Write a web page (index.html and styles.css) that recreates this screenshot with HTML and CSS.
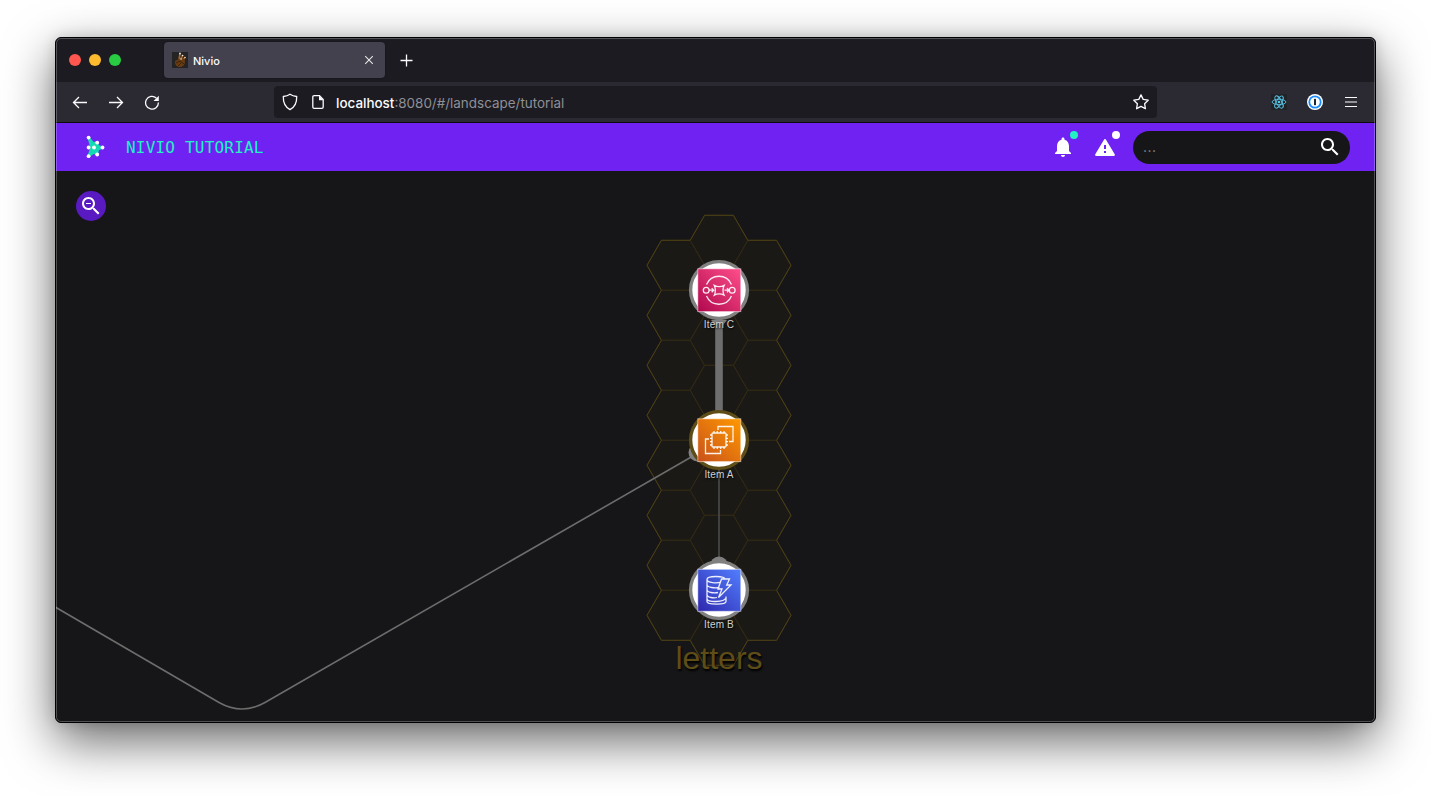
FILE: index.html
```html
<!DOCTYPE html>
<html lang="en">
<head>
<meta charset="utf-8">
<title>Nivio</title>
<link rel="stylesheet" href="styles.css">
</head>
<body>
<main class="window">
  <div class="tabbar">
    <div class="lights"><i class="light red"></i><i class="light yellow"></i><i class="light green"></i></div>
    <div class="tab">
      <svg class="favicon" width="16" height="16" viewBox="0 0 16 16"><path fill="#242424" d="M0 0h16v16H0z"/><path d="M3 10c0-2 3-2 4-3l1-2 4 1c2 3 1 9-4 9-3 0-5-2-5-5z" fill="#6a3c12"/><path d="M7 7 8 2M9 7l2-4M12 7l1-2" stroke="#a4642b" stroke-width="1.6"/><path d="M4 11l4-2 4 3M6 14l3-3" stroke="#3b2009" fill="none"/><circle cx="8" cy="1.5" r=".9" fill="#eee"/><circle cx="10.500" cy="3.500" r=".8" fill="#eee"/><circle cx="13" cy="5.500" r=".8" fill="#e6d5bd"/><circle cx="9" cy="7" r=".8" fill="#ddd"/></svg>
      <span class="tab-title">Nivio</span>
      <svg width="10" height="10" viewBox="0 0 10 10"><path d="M1.200 1.200l7.600 7.600M8.800 1.200 1.200 8.800" stroke="#e6e6ea" stroke-width="1.100"/></svg>
    </div>
    <svg class="plus" width="13" height="13" viewBox="0 0 13 13"><path d="M6.500.5v12M.5 6.500h12" stroke="#fbfbfe" stroke-width="1.300"/></svg>
  </div>
  <div class="toolbar">
    <div class="nav">
      <svg width="16" height="16" viewBox="0 0 16 16" class="line"><path d="M15 8.500H1.500M7 3 1.500 8.500 7 14"/></svg>
      <svg width="16" height="16" viewBox="0 0 16 16" class="line"><path d="M1 8.500h13.500M9 3l5.500 5.500L9 14"/></svg>
      <svg width="16" height="16" viewBox="0 0 16 16" class="line"><path d="M12.300 4A6.400 6.400 0 1 0 14.400 8.600"/><path d="M14.800 1.800v5.300H9.500z" fill="#fbfbfe" stroke="none"/></svg>
    </div>
    <div class="urlbar">
      <svg width="16" height="18" viewBox="0 0 16 18" class="line"><path d="M8 1.300c2 1.400 4.200 2 6.700 2.200.2 6-1.900 10.600-6.700 13.100C3.200 14.100 1.100 9.500 1.300 3.500 3.800 3.300 6 2.700 8 1.300z"/></svg>
      <svg width="12" height="14" viewBox="0 0 12 14" class="line"><path d="M7.500.7H2.200Q.8.700.8 2v10q0 1.300 1.400 1.300h7.600q1.400 0 1.400-1.300V4.500z"/><path d="M7 .7v4.600h4.600z" fill="#fbfbfe" stroke="none"/></svg>
      <span class="url"><b>localhost</b>:8080/#/landscape/tutorial</span>
      <svg width="16" height="16" viewBox="0 0 16 16" class="line"><path stroke-linejoin="round" d="M8 .9l2.200 4.500 5 .8-3.600 3.500.8 5L8 12.400l-4.400 2.300.8-5L.8 6.200l5-.8z"/></svg>
    </div>
    <div class="extensions">
      <svg width="16" height="16" viewBox="0 0 16 16"><path fill="#222326" d="M0 0h16v16H0z"/><g fill="none" stroke="#58c4e8" stroke-width=".9"><ellipse cx="8" cy="8" rx="6.900" ry="2.700"/><ellipse cx="8" cy="8" rx="6.900" ry="2.700" transform="rotate(60 8 8)"/><ellipse cx="8" cy="8" rx="6.900" ry="2.700" transform="rotate(120 8 8)"/></g><circle cx="8" cy="8" r="1.300" fill="#58c4e8"/></svg>
      <svg width="16" height="16" viewBox="0 0 16 16"><circle cx="8" cy="8" r="8" fill="#fff"/><circle cx="8" cy="8" r="5.700" fill="#fff" stroke="#1a8cff" stroke-width="1.800"/><rect x="7" y="4.800" width="2" height="6.400" rx=".6" fill="#1b2733"/></svg>
      <svg width="12" height="10" viewBox="0 0 12 10"><path d="M0 .5h12M0 5h12M0 9.500h12" stroke="#fbfbfe" stroke-width="1.200"/></svg>
    </div>
  </div>
  <header class="appbar">
    <svg width="24" height="28" viewBox="84 133 24 28"><path d="M88.500 137.500 93 143l4-.5 1 3.500 4.500 1.500-4.500 2-1 5-3-2-5.500 3.500 2.500-7-2.500-1.500 2.500-1.500z" fill="#16d9b2" stroke="#16d9b2" stroke-width="2.200" stroke-linejoin="round"/><g fill="#fff"><circle cx="88.600" cy="137.600" r="1.900"/><circle cx="97.200" cy="142.600" r="1.900"/><circle cx="88.600" cy="147.500" r="1.900"/><circle cx="94" cy="147.500" r="1.900"/><circle cx="102.500" cy="147.500" r="1.900"/><circle cx="97.200" cy="154.500" r="1.900"/><circle cx="88.600" cy="156.200" r="1.900"/></g></svg>
    <h1 class="title">NIVIO TUTORIAL</h1>
    <div class="notice"><svg width="24" height="24" viewBox="0 0 24 24" fill="#fff"><path d="M12 22c1.100 0 2-.9 2-2h-4c0 1.100.89 2 2 2zm6-6v-5c0-3.070-1.640-5.640-4.500-6.320V4c0-.83-.67-1.500-1.500-1.500s-1.500.67-1.500 1.500v.68C7.630 5.360 6 7.920 6 11v5l-2 2v1h16v-1l-2-2z"/></svg><i class="badge teal"></i></div>
    <div class="notice"><svg width="24" height="24" viewBox="0 0 24 24"><path d="M12 5.300 20.700 19.800H3.300z" fill="#fff" stroke="#fff" stroke-width="2.400" stroke-linejoin="round"/><path d="M11 10h2v4h-2zM11 16h2v2h-2z" fill="#6f22f2"/></svg><i class="badge white"></i></div>
    <div class="search"><span>...</span><svg width="24" height="24" viewBox="0 0 24 24" fill="#fff"><path d="M15.500 14h-.79l-.28-.27C15.410 12.590 16 11.110 16 9.500 16 5.910 13.090 3 9.500 3S3 5.910 3 9.500 5.910 16 9.500 16c1.610 0 3.090-.59 4.230-1.570l.27.28v.79l5 4.990L20.490 19l-4.990-5zm-6 0C7.010 14 5 11.990 5 9.500S7.010 5 9.500 5 14 7.010 14 9.500 11.990 14 9.500 14z"/></svg></div>
  </header>
  <section class="map">
    <svg class="landscape" width="1319" height="551" viewBox="56 171 1319 551">
      <defs>
        <path id="hex" d="M-28.800 0-14.400-25H14.400L28.800 0 14.400 25H-14.400z"/>
        <g id="column"><use href="#hex" y="265"/><use href="#hex" y="315"/><use href="#hex" y="365"/><use href="#hex" y="415"/><use href="#hex" y="465"/><use href="#hex" y="515"/><use href="#hex" y="565"/><use href="#hex" y="615"/></g>
        <linearGradient id="pink" x1="0" y1="1" x2="1" y2="0"><stop stop-color="#b0084d"/><stop offset="1" stop-color="#ff4f8b"/></linearGradient>
        <linearGradient id="orange" x1="0" y1="1" x2="1" y2="0"><stop stop-color="#c8511b"/><stop offset="1" stop-color="#ff9900"/></linearGradient>
        <linearGradient id="blue" x1="0" y1="1" x2="1" y2="0"><stop stop-color="#2e27ad"/><stop offset="1" stop-color="#527fff"/></linearGradient>
      </defs>
      <g transform="translate(0 .3)">
      <g class="cells">
        <use href="#column" x="675.800"/><use href="#column" x="762.200"/>
        <g transform="translate(719 0)"><use href="#hex" y="240"/><use href="#hex" y="290"/><use href="#hex" y="340"/><use href="#hex" y="390"/><use href="#hex" y="440"/><use href="#hex" y="490"/><use href="#hex" y="540"/><use href="#hex" y="590"/><use href="#hex" y="640"/></g>
      </g>
      <path class="outline" d="M704.600 215h28.800l14.400 25h28.800l14.400 25-14.400 25 14.400 25-14.400 25 14.400 25-14.400 25 14.400 25-14.400 25 14.400 25-14.400 25 14.400 25-14.400 25 14.400 25-14.400 25 14.400 25-14.400 25h-28.800l-14.400 25h-28.800l-14.400-25h-28.800L647 615l14.400-25L647 565l14.400-25L647 515l14.400-25L647 465l14.400-25L647 415l14.400-25L647 365l14.400-25L647 315l14.400-25L647 265l14.400-25h28.800z"/>
      </g>
      <text class="group-name" x="719" y="669">letters</text>
      <path d="M719 315v100" stroke="#6e6e6e" stroke-width="7.600"/>
      <path d="M719 465v95" stroke="#4c4b4a" stroke-width="1.600"/>
      <path d="M693 456 265 702.500q-23 13-46 0L50 604" fill="none" stroke="#6c6c6c" stroke-width="1.600"/>
      <circle cx="719" cy="565.500" r="9" fill="#808080"/><circle cx="697.500" cy="452.500" r="9" fill="#808080"/>
      <path d="M711 320h16l-4 5h-8z" fill="#808080"/>
      <g class="node"><circle cx="719" cy="290" r="28.400" stroke="#808080"/><rect x="697.800" y="268.800" width="43" height="42.800" fill="url(#pink)"/>
        <g class="glyph"><path d="M706.500 284.500a13.600 13.600 0 0 1 25 0M706.500 296a13.600 13.600 0 0 0 25 0"/><circle cx="706.200" cy="290.200" r="2.900"/><circle cx="732.200" cy="290.200" r="2.900"/><path d="M709 290.200h4.500m-1.800-2 2 2-2 2M724.500 290.200h4.300m-1.800-2 2 2-2 2M714.300 285.400q4.900 2.600 9.800 0-2.200 4.900 0 9.800-4.900-2.500-9.800 0 2.200-4.900 0-9.800z"/></g></g>
      <g class="node"><circle cx="719" cy="440" r="28.400" stroke="#5f4d17"/><rect x="697.800" y="418.800" width="43" height="42.800" fill="url(#orange)"/>
        <g class="glyph"><rect x="712" y="433" width="14" height="14" rx="1"/><path d="M714 433v-2m3.300 2v-2m3.400 2v-2m3.300 2v-2M714 449v-2m3.300 2v-2m3.400 2v-2m3.300 2v-2M712 435h-2m2 3.300h-2m2 3.400h-2m2 3.300h-2M728 435h-2m2 3.300h-2m2 3.400h-2m2 3.300h-2M718 430v-3.500h15v15h-4M709 439h-3.500v14.500h15V450"/></g></g>
      <g class="node"><circle cx="719" cy="590" r="28.400" stroke="#808080"/><rect x="697.800" y="569.300" width="43" height="42" fill="url(#blue)"/>
        <g class="glyph"><path d="M707 579.500c0-4 18-4 18 0M707 579.500c0 3.500 10 4 14 2.500M707 579.500v22c0 3.500 19 3.500 19 0v-5M707 584.500c0 3 8 4 12.500 3M707 589.500c0 3 7 4 11 3M707 594.500c0 3 7 4 10 3M707 599c1 3.500 17 3.500 19-1M721.500 579h8l-2.800 6h4.300l-12.500 12.500 3.500-8.500h-4z"/></g></g>
      <g class="labels"><text x="719" y="327.500">Item C</text><text x="719" y="477.700">Item A</text><text x="719" y="627.700">Item B</text></g>
    </svg>
    <button class="zoom-out" aria-label="Zoom out"><svg width="24" height="24" viewBox="0 0 24 24" fill="#fff"><path d="M15.500 14h-.79l-.28-.27C15.410 12.590 16 11.110 16 9.500 16 5.910 13.090 3 9.500 3S3 5.910 3 9.500 5.910 16 9.500 16c1.610 0 3.090-.59 4.230-1.570l.27.28v.79l5 4.990L20.490 19l-4.990-5zm-6 0C7.010 14 5 11.990 5 9.500S7.010 5 9.500 5 14 7.010 14 9.500 11.990 14 9.500 14zM7 9h5v1H7z"/></svg></button>
  </section>
</main>
</body>
</html>
```
FILE: styles.css
```css
* { box-sizing: border-box; }
body { margin: 0; height: 796px; padding: 37px 55px; background: #fff; overflow: hidden; }
svg { display: block; flex: none; }
.window { position: relative; width: 1321px; height: 686px; border: 1px solid #000; border-radius: 6px; overflow: hidden; background: #161618; box-shadow: 0 18px 50px rgba(0,0,0,.6), 0 0 14px rgba(0,0,0,.14); font-family: Inter, sans-serif; }
.window::after { content: ""; position: absolute; inset: 0; border: 1px solid rgba(255,255,255,.25); border-radius: 5px; pointer-events: none; }
.tabbar { height: 44px; background: #1c1b22; display: flex; align-items: center; padding-left: 13px; }
.lights { display: flex; gap: 8px; width: 95px; }
.light { width: 12px; height: 12px; border-radius: 50%; }
.red { background: #ff5650; }
.yellow { background: #fdbc2e; }
.green { background: #28cb42; }
.tab { width: 221px; height: 36px; border-radius: 4px; background: #42414d; display: flex; align-items: center; padding: 0 11px 0 8px; color: #fbfbfe; box-shadow: 0 0 2px rgba(0,0,0,.4); }
.tab-title { flex: 1; margin-left: 5px; font-size: 11px; font-weight: 500; line-height: 16px; padding-top: 2px; }
.plus { margin-left: 15px; margin-top: 1px; }
.toolbar { height: 41px; background: #2b2a33; border-bottom: 1px solid #0c0c0d; display: flex; align-items: center; padding: 0 19px 0 16px; }
.line { fill: none; stroke: #fbfbfe; stroke-width: 1.3; }
.nav { display: flex; gap: 20px; width: 202px; }
.urlbar { width: 883px; height: 32px; border-radius: 4px; background: #1c1b22; display: flex; align-items: center; padding: 0 8px; }
.urlbar svg:nth-child(2) { margin-left: 14px; }
.url { flex: 1; margin-left: 12px; color: #8f8f95; font-size: 13.45px; line-height: 18px; padding-top: 2px; }
.url b { color: #fbfbfe; font-weight: 500; }
.extensions { margin-left: auto; display: flex; align-items: center; gap: 20px; }
.extensions svg:last-child { margin: 0 -1px 0 0; margin-left: 2px; }
.appbar { height: 48px; background: #6f22f2; display: flex; align-items: center; padding: 0 25px 0 28px; }
.title { flex: 1; margin: 0 0 0 18px; padding-top: 2px; color: #22f2c3; font: 400 16px/24px "DejaVu Sans Mono", monospace; letter-spacing: .2px; }
.notice { position: relative; margin-right: 18px; }
.badge { position: absolute; width: 8px; height: 8px; border-radius: 50%; left: 19px; top: -4px; }
.teal { background: #22f2c3; }
.white { background: #fff; }
.notice + .search { margin-left: -2px; }
.search { width: 217px; height: 33px; margin-top: 1px; border-radius: 17px; background: #161618; display: flex; align-items: center; justify-content: space-between; padding: 0 8px 2px 10px; color: #858585; font-size: 14px; letter-spacing: .5px; }
.map { position: relative; height: 551px; background: #161618; }
.zoom-out { position: absolute; left: 20px; top: 20px; width: 30px; height: 30px; border: 0; border-radius: 50%; padding: 3px; background: #591ac2; }
.cells { fill: #1a1916; stroke: #332b13; stroke-width: 1; }
.outline { fill: none; stroke: #4d4016; stroke-width: 1; }
.group-name { font: 32px "Liberation Sans", sans-serif; text-anchor: middle; fill: #5f4d18; text-shadow: 1px 2px 2px #000; }
.node circle { fill: #fff; stroke-width: 3.4; }
.node rect { stroke: rgba(255,255,255,.5); stroke-width: 1; }
.node .glyph, .node .glyph circle, .node .glyph rect { fill: none; stroke: #fff; stroke-width: 1.3; stroke-opacity: .9; }
.labels { font: 10px "Liberation Sans", sans-serif; letter-spacing: .15px; text-anchor: middle; fill: #d0d0d0; text-shadow: 1px 1px 2px #000; }
```
